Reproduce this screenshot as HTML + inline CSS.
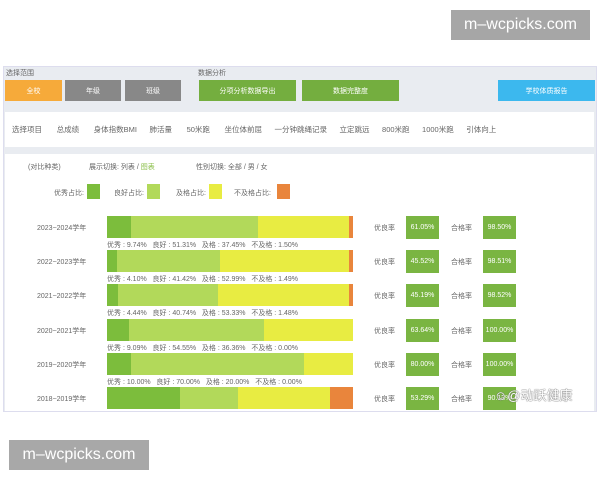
<!DOCTYPE html>
<html><head><meta charset="utf-8"><style>
*{margin:0;padding:0;box-sizing:border-box}
body{width:600px;height:480px;background:#fff;position:relative;overflow:hidden;font-family:"Liberation Sans","Noto Sans CJK SC",sans-serif;color:#555;font-size:7px}
.a{position:absolute}
.wm{position:absolute;color:#fff;font-size:16px;display:flex;align-items:center;justify-content:center}
.scr{position:absolute;left:3px;top:66px;width:594px;height:346px;background:#e9ecf1;border:1px solid #dde;overflow:hidden}
.btn{position:absolute;color:#fff;font-size:7px;display:flex;align-items:center;justify-content:center;top:13px;height:21px}
.bar{position:absolute;left:103px;width:246px;height:22px;display:flex}
.bar div{height:100%}
.d{background:#7cbd3c}.l{background:#b2d95a}.y{background:#e8ec42}.o{background:#e9853c}
.lbl{position:absolute;left:103px;font-size:7px;color:#666;white-space:nowrap}
.yr{position:absolute;left:33px;font-size:7px;color:#666}
.bx{position:absolute;width:33px;height:23px;background:#7ab542;color:#fff;font-size:7px;display:flex;align-items:center;justify-content:center}
.t{position:absolute;font-size:7px;color:#666}
.sw{position:absolute;top:117px;width:13px;height:15px}
</style></head><body>
<div class="wm" style="left:451px;top:10px;width:139px;height:30px;background:#a6a6a6">m–wcpicks.com</div>
<div class="wm" style="left:9px;top:440px;width:140px;height:30px;background:#a8a8a8">m–wcpicks.com</div>
<div class="scr">
<div class="t" style="left:2px;top:1px">选择范围</div>
<div class="t" style="left:194px;top:1px">数据分析</div>
<div class="btn" style="left:1px;width:57px;background:#f6aa3a">全校</div>
<div class="btn" style="left:61px;width:56px;background:#888">年级</div>
<div class="btn" style="left:121px;width:56px;background:#888">班级</div>
<div class="btn" style="left:195px;width:97px;background:#74ae3f">分项分析数据导出</div>
<div class="btn" style="left:298px;width:97px;background:#74ae3f">数据完整度</div>
<div class="btn" style="left:494px;width:97px;background:#3cb8ee">学校体质报告</div>
<div class="a" style="left:1px;top:45px;width:589px;height:35px;background:#fff"></div>
<div class="t" style="left:8px;top:57px;font-size:7.5px">选择项目&nbsp;&nbsp;&nbsp;&nbsp;&nbsp;&nbsp;&nbsp;总成绩&nbsp;&nbsp;&nbsp;&nbsp;&nbsp;&nbsp;&nbsp;身体指数BMI&nbsp;&nbsp;&nbsp;&nbsp;&nbsp;&nbsp;肺活量&nbsp;&nbsp;&nbsp;&nbsp;&nbsp;&nbsp;&nbsp;50米跑&nbsp;&nbsp;&nbsp;&nbsp;&nbsp;&nbsp;&nbsp;坐位体前屈&nbsp;&nbsp;&nbsp;&nbsp;&nbsp;&nbsp;一分钟跳绳记录&nbsp;&nbsp;&nbsp;&nbsp;&nbsp;&nbsp;立定跳远&nbsp;&nbsp;&nbsp;&nbsp;&nbsp;&nbsp;800米跑&nbsp;&nbsp;&nbsp;&nbsp;&nbsp;&nbsp;1000米跑&nbsp;&nbsp;&nbsp;&nbsp;&nbsp;&nbsp;引体向上</div>
<div class="a" style="left:1px;top:87px;width:589px;height:270px;background:#fff"></div>
<div class="t" style="left:24px;top:95px">(对比种类)</div>
<div class="t" style="left:85px;top:95px">展示切换: 列表 / <span style="color:#8bbf4a">图表</span></div>
<div class="t" style="left:192px;top:95px">性别切换: 全部 / 男 / 女</div>
<div class="t" style="left:50px;top:121px">优秀占比:</div><div class="sw d" style="left:83px"></div>
<div class="t" style="left:110px;top:121px">良好占比:</div><div class="sw l" style="left:143px"></div>
<div class="t" style="left:172px;top:121px">及格占比:</div><div class="sw y" style="left:205px"></div>
<div class="t" style="left:230px;top:121px">不及格占比:</div><div class="sw o" style="left:273px"></div>

<div class="yr" style="top:156px">2023~2024学年</div>
<div class="bar" style="top:149px"><div class="d" style="width:24px"></div><div class="l" style="width:127px"></div><div class="y" style="width:91px"></div><div class="o" style="width:4px"></div></div>
<div class="lbl" style="top:173px">优秀 : 9.74%&nbsp;&nbsp;&nbsp;良好 : 51.31%&nbsp;&nbsp;&nbsp;及格 : 37.45%&nbsp;&nbsp;&nbsp;不及格 : 1.50%</div>
<div class="t" style="left:370px;top:156px">优良率</div><div class="bx" style="left:402px;top:149px">61.05%</div>
<div class="t" style="left:447px;top:156px">合格率</div><div class="bx" style="left:479px;top:149px">98.50%</div>

<div class="yr" style="top:190px">2022~2023学年</div>
<div class="bar" style="top:183px"><div class="d" style="width:10px"></div><div class="l" style="width:103px"></div><div class="y" style="width:129px"></div><div class="o" style="width:4px"></div></div>
<div class="lbl" style="top:207px">优秀 : 4.10%&nbsp;&nbsp;&nbsp;良好 : 41.42%&nbsp;&nbsp;&nbsp;及格 : 52.99%&nbsp;&nbsp;&nbsp;不及格 : 1.49%</div>
<div class="t" style="left:370px;top:190px">优良率</div><div class="bx" style="left:402px;top:183px">45.52%</div>
<div class="t" style="left:447px;top:190px">合格率</div><div class="bx" style="left:479px;top:183px">98.51%</div>

<div class="yr" style="top:224px">2021~2022学年</div>
<div class="bar" style="top:217px"><div class="d" style="width:11px"></div><div class="l" style="width:100px"></div><div class="y" style="width:131px"></div><div class="o" style="width:4px"></div></div>
<div class="lbl" style="top:241px">优秀 : 4.44%&nbsp;&nbsp;&nbsp;良好 : 40.74%&nbsp;&nbsp;&nbsp;及格 : 53.33%&nbsp;&nbsp;&nbsp;不及格 : 1.48%</div>
<div class="t" style="left:370px;top:224px">优良率</div><div class="bx" style="left:402px;top:217px">45.19%</div>
<div class="t" style="left:447px;top:224px">合格率</div><div class="bx" style="left:479px;top:217px">98.52%</div>

<div class="yr" style="top:259px">2020~2021学年</div>
<div class="bar" style="top:252px"><div class="d" style="width:22px"></div><div class="l" style="width:135px"></div><div class="y" style="width:89px"></div></div>
<div class="lbl" style="top:276px">优秀 : 9.09%&nbsp;&nbsp;&nbsp;良好 : 54.55%&nbsp;&nbsp;&nbsp;及格 : 36.36%&nbsp;&nbsp;&nbsp;不及格 : 0.00%</div>
<div class="t" style="left:370px;top:259px">优良率</div><div class="bx" style="left:402px;top:252px">63.64%</div>
<div class="t" style="left:447px;top:259px">合格率</div><div class="bx" style="left:479px;top:252px">100.00%</div>

<div class="yr" style="top:293px">2019~2020学年</div>
<div class="bar" style="top:286px"><div class="d" style="width:24px"></div><div class="l" style="width:173px"></div><div class="y" style="width:49px"></div></div>
<div class="lbl" style="top:310px">优秀 : 10.00%&nbsp;&nbsp;&nbsp;良好 : 70.00%&nbsp;&nbsp;&nbsp;及格 : 20.00%&nbsp;&nbsp;&nbsp;不及格 : 0.00%</div>
<div class="t" style="left:370px;top:293px">优良率</div><div class="bx" style="left:402px;top:286px">80.00%</div>
<div class="t" style="left:447px;top:293px">合格率</div><div class="bx" style="left:479px;top:286px">100.00%</div>

<div class="yr" style="top:327px">2018~2019学年</div>
<div class="bar" style="top:320px"><div class="d" style="width:73px"></div><div class="l" style="width:58px"></div><div class="y" style="width:92px"></div><div class="o" style="width:23px"></div></div>
<div class="lbl" style="top:344px">优秀 : 26.32%&nbsp;&nbsp;&nbsp;良好 : 26.97%&nbsp;&nbsp;&nbsp;及格 : 36.84%&nbsp;&nbsp;&nbsp;不及格 : 9.87%</div>
<div class="t" style="left:370px;top:327px">优良率</div><div class="bx" style="left:402px;top:320px">53.29%</div>
<div class="t" style="left:447px;top:327px">合格率</div><div class="bx" style="left:479px;top:320px">90.13%</div>
<div class="t" style="left:490px;top:318px;font-size:13px;color:#fff;text-shadow:0 0 1px #666,0 0 1px #666">☺@动跃健康</div>
</div>
</body></html>
